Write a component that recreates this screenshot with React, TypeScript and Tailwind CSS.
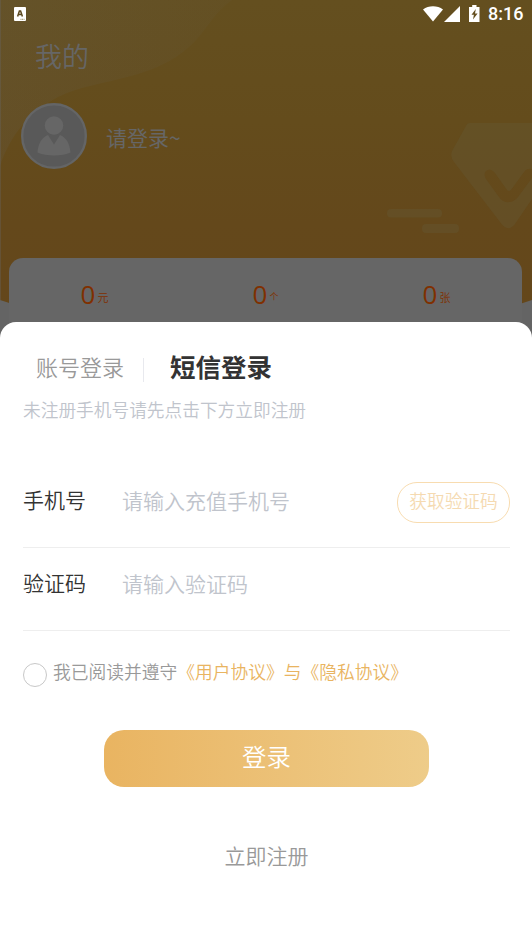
const balances = [
  { value: '0', unit: '元', unitClass: 'text-[11px]' },
  { value: '0', unit: '个', unitClass: 'text-[9px]' },
  { value: '0', unit: '张', unitClass: 'text-[11px]' },
];

const fields = [
  { label: '手机号', placeholder: '请输入充值手机号', hasCode: true },
  { label: '验证码', placeholder: '请输入验证码', hasCode: false },
];

function StatusBar() {
  return (
    <div className="flex h-[27px] items-center justify-between pl-[14px] pr-[8px]">
      <svg width="12" height="14" viewBox="0 0 12 14">
        <rect width="12" height="14" rx="1" fill="#fff" />
        <path d="M3.6 9.5 5.4 4h1.2l1.8 5.5M4.3 7.6h3.4" fill="none" stroke="#5b481f" strokeWidth="1.5" />
        <path d="M6.5 12.3h4" stroke="#8f8156" strokeWidth="1" strokeDasharray="1 .6" />
      </svg>
      <div className="flex items-center text-white">
        <svg width="20" height="16" viewBox="0 0 20 16" fill="currentColor">
          <path d="M0 3.4C5.6-.9 14.4-.9 20 3.4L10 15.6z" />
        </svg>
        <svg className="ml-px" width="17" height="16" viewBox="0 0 17 16" fill="currentColor">
          <path d="M16 0v16H0z" />
        </svg>
        <svg className="ml-2" width="11" height="17" viewBox="0 0 11 17">
          <path d="M3.2 0h4.300v2h3v15H0V2h3.200z" fill="#fff" />
          <path d="M6.8 4 2.5 9.800h2.400L4 14.500l4.600-6H6z" fill="#644e1f" />
        </svg>
        <span className="ml-2 w-9 font-[Roboto] text-[18px] font-medium leading-[27px]">8:16</span>
      </div>
    </div>
  );
}

function Backdrop() {
  return (
    <svg className="absolute inset-0" width="532" height="340" viewBox="0 0 532 340">
      <defs>
        <linearGradient id="gold" x1="0" y1="0" x2="0" y2="1">
          <stop offset="0" stopColor="#644f1f" />
          <stop offset=".35" stopColor="#644c1c" />
          <stop offset=".65" stopColor="#64481b" />
          <stop offset="1" stopColor="#64461b" />
        </linearGradient>
        <linearGradient id="sheen" x1="0" y1="0" x2="1" y2="0">
          <stop offset="0" stopColor="#666" stopOpacity=".14" />
          <stop offset="1" stopColor="#666" stopOpacity=".06" />
        </linearGradient>
      </defs>
      <path d="M0 0h532v300q-266 90-532 0z" fill="url(#gold)" />
      <path d="M0 0h232C212 14 205 34 188 48 158 74 120 78 82 88 38 100 12 130 0 166z" fill="url(#sheen)" />
      <path d="M0 0h1v300H0z" fill="#666" fillOpacity=".35" />
      <g fill="#645a3a" fillOpacity=".33">
        <rect x="387" y="209" width="55" height="8.500" rx="4" />
        <rect x="422" y="224" width="37" height="9" rx="4" />
        <path
          fillRule="evenodd"
          d="M470 123h62v76l-15 22q-8 14-17 1l-46-60q-4-5-2-11l14-25q1-3 4-3zM532 169q-5-1-8 3l-13 18q-2 2-4 0l-12-17q-5-6-9-2-3 3 0 8l13 18q4 6 10 5 5 0 9-5l14-19z"
        />
      </g>
    </svg>
  );
}

function Avatar() {
  return (
    <svg width="66" height="67" viewBox="0 0 66 67">
      <circle cx="33" cy="33" r="31.800" fill="#595959" stroke="#646566" strokeWidth="2.400" />
      <g fill="#666">
        <circle cx="33" cy="22.500" r="9.300" />
        <path d="M27 32 33 41.500l6-9.500c6 2 10 9 10.500 17.500-8 4-25 4-33 0C17 41 21 34 27 32z" />
      </g>
    </svg>
  );
}

function Header() {
  return (
    <header className="relative h-[340px] overflow-hidden bg-[#646464]">
      <Backdrop />
      <div className="relative">
        <StatusBar />
        <h1 className="ml-[35px] mt-[9px] text-[27px] font-[350] leading-10 text-[#666]">我的</h1>
        <div className="ml-[21px] mt-[27px] flex items-center">
          <Avatar />
          <span className="ml-[19px] text-[21px] leading-8 text-[#666]">请登录~</span>
        </div>
        <div className="ml-[9px] mr-[10px] mt-[88px] grid h-[90px] grid-cols-3 rounded-t-[14px] bg-[#666] pt-[18px] text-[#803000]">
          {balances.map((item) => (
            <div key={item.unit} className="flex h-9 items-center justify-center gap-[2px]">
              <span className="font-['Open_Sans'] text-[26px] leading-9">{item.value}</span>
              <span className={`mt-[5px] font-[350] leading-4 ${item.unitClass}`}>{item.unit}</span>
            </div>
          ))}
        </div>
      </div>
    </header>
  );
}

function LoginSheet() {
  return (
    <main className="relative -mt-[18px] h-[624px] rounded-t-[16px] bg-white pl-[23px] pr-[22px] pt-[24px] font-[350]">
      <div className="flex h-10 items-center pl-[13px]">
        <span className="text-[22px] leading-8 text-[#999]">账号登录</span>
        <span className="ml-[19px] mt-2 h-6 w-px bg-[#e8e9ee]" />
        <span className="ml-[26px] text-[25.500px] font-bold leading-10 text-[#333]">短信登录</span>
      </div>
      <p className="mt-[11px] text-[17.700px] leading-6 text-[#c0c4cc]">未注册手机号请先点击下方立即注册</p>

      <div className="mt-[44px]">
        {fields.map((field) => (
          <div key={field.label} className="flex h-[83px] items-start border-b border-[#eee] pt-[17px]">
            <span className="mt-px w-[99px] text-[21px] leading-8 text-[#333]">{field.label}</span>
            <span className="mt-[2px] flex-1 text-[21px] leading-8 text-[#c0c4cc]">{field.placeholder}</span>
            {field.hasCode && (
              <button className="h-[41px] w-[113px] rounded-[20px] border border-[#f8dcb0] pb-[5px] text-[17.700px] leading-6 text-[#f5dab1]">
                获取验证码
              </button>
            )}
          </div>
        ))}
      </div>

      <div className="mt-[28px] flex h-7 items-start">
        <span className="mt-[4px] size-[23.500px] rounded-full border border-[#c8c8c8]" />
        <p className="ml-[6.500px] text-[17.750px] leading-6 text-[#999]">
          我已阅读并遵守<span className="text-[#e9b461]">《用户协议》与《隐私协议》</span>
        </p>
      </div>

      <button className="mx-auto mt-[43px] block h-[57px] w-[325px] rounded-[20px] bg-linear-to-r from-[#e9b461] to-[#eecc89] pb-[5px] text-[24.400px] text-white">
        登录
      </button>
      <p className="mt-[52px] text-center text-[21px] leading-8 text-[#999]">立即注册</p>
    </main>
  );
}

export default function App() {
  return (
    <div className="h-[946px] w-[532px] overflow-hidden bg-white font-['Noto_Sans_CJK_SC',sans-serif]">
      <Header />
      <LoginSheet />
    </div>
  );
}
